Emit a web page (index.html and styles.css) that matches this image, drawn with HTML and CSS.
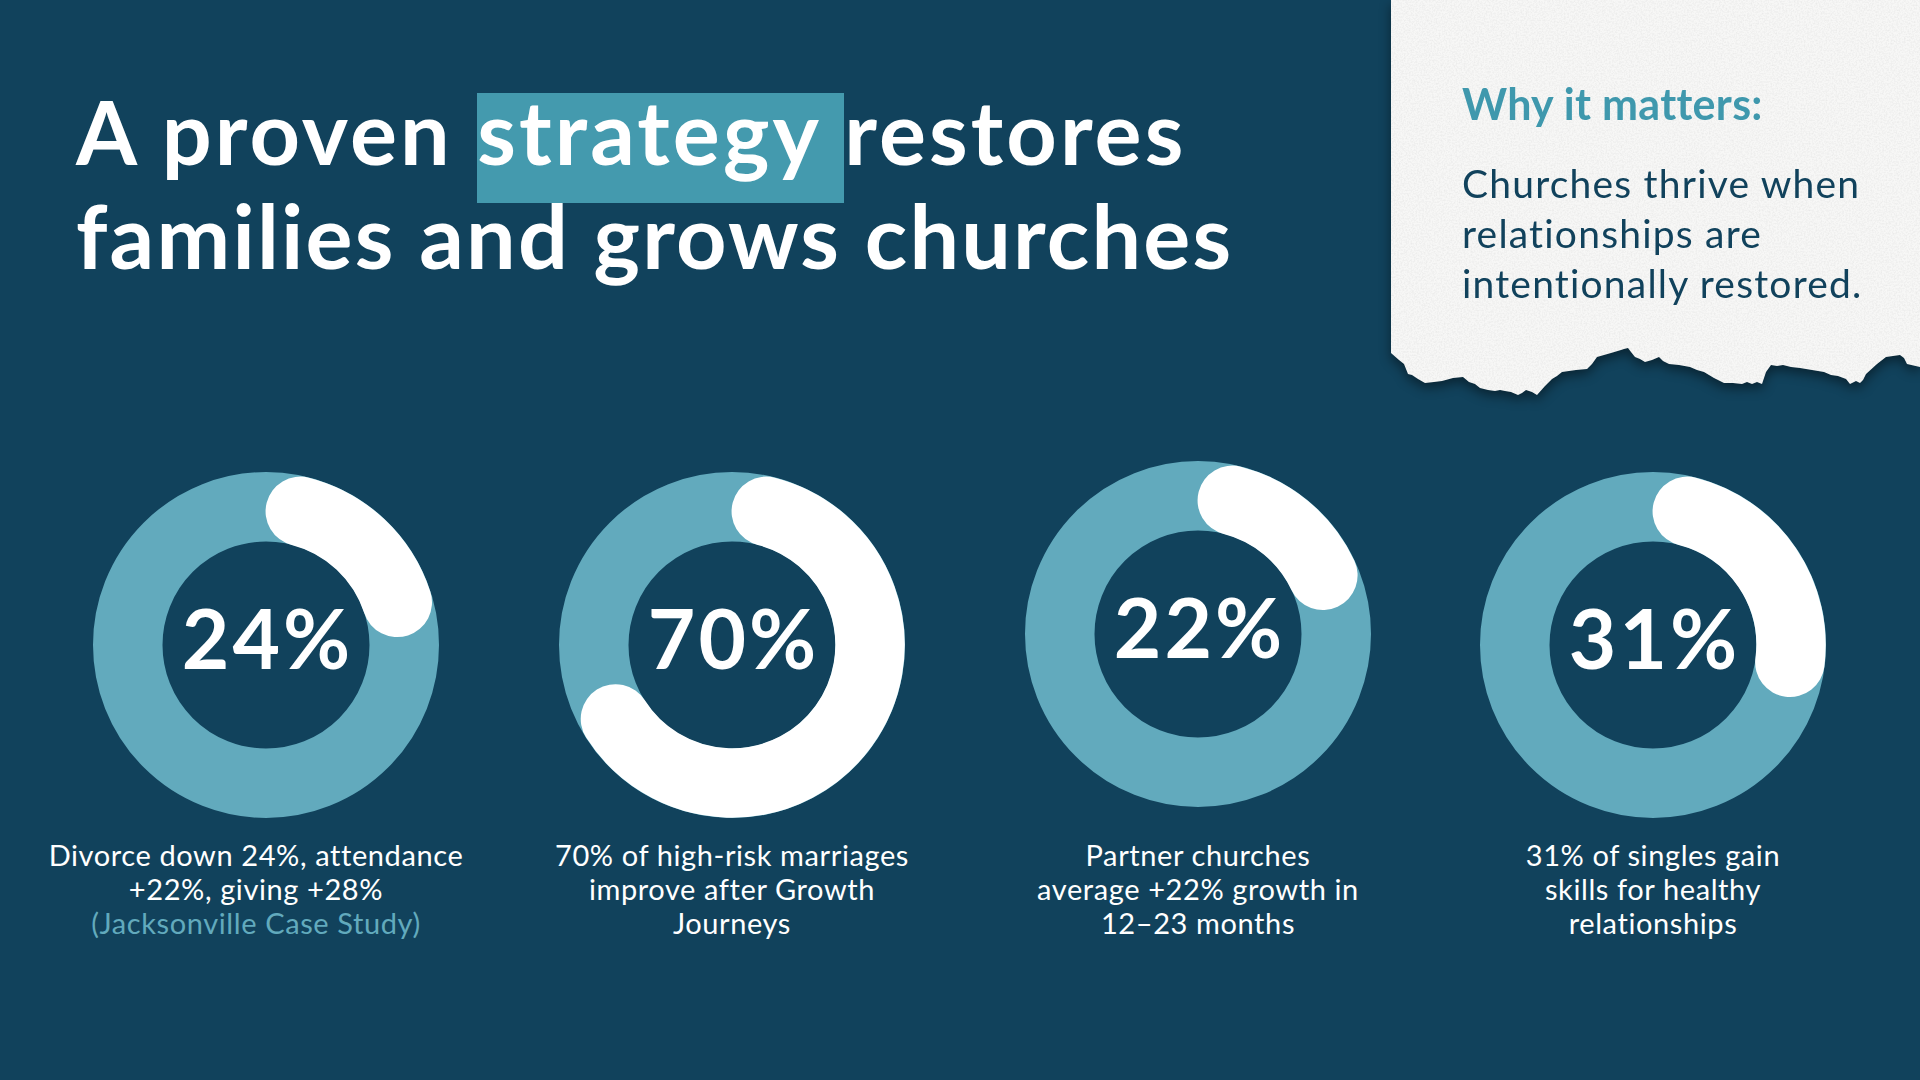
FILE: index.html
```html
<!DOCTYPE html>
<html lang="en">
<head>
<meta charset="utf-8">
<title>A proven strategy restores families and grows churches</title>
<link rel="stylesheet" href="styles.css">
</head>
<body>
<main class="slide">
  <header class="top">
    <h1 class="title"><span class="line1">A proven <span class="hl">strategy&nbsp;</span>restores</span><br>families and grows churches</h1>
    <aside class="paper-wrap">
      <div class="paper">
        <svg class="grain" width="100%" height="100%" aria-hidden="true">
          <filter id="noise" x="0" y="0" width="100%" height="100%">
            <feTurbulence type="fractalNoise" baseFrequency="0.6" numOctaves="3" seed="7" result="n"/>
            <feColorMatrix type="matrix" values="0 0 0 0 0.5  0 0 0 0 0.5  0 0 0 0 0.5  0 0 0 -1.2 0.75"/>
          </filter>
          <rect width="100%" height="100%" filter="url(#noise)" opacity="0.32"/>
        </svg>
        <div class="paper-body">
          <h2 class="why">Why it matters:</h2>
          <p class="why-text">Churches thrive when<br>relationships are<br>intentionally restored.</p>
        </div>
      </div>
    </aside>
  </header>

  <section class="stats">
    <figure class="stat">
      <div class="donut">
        <svg viewBox="0 0 346 346" width="346" height="346">
          <circle cx="173" cy="173" r="138.25" class="ring"/>
          <path d="M207.32 39.33 A138 138 0 0 1 304.25 130.36" class="arc"/>
        </svg>
        <span class="pct">24%</span>
      </div>
      <figcaption class="cap cap-first">Divorce down 24%, attendance<br>+22%, giving +28%<br><span class="src">(Jacksonville Case Study)</span></figcaption>
    </figure>
    <figure class="stat">
      <div class="donut">
        <svg viewBox="0 0 346 346" width="346" height="346">
          <circle cx="173" cy="173" r="138.25" class="ring"/>
          <path d="M207.32 39.33 A138 138 0 1 1 56.49 246.94" class="arc"/>
        </svg>
        <span class="pct">70%</span>
      </div>
      <figcaption class="cap">70% of high-risk marriages<br>improve after Growth<br>Journeys</figcaption>
    </figure>
    <figure class="stat stat-lift">
      <div class="donut">
        <svg viewBox="0 0 346 346" width="346" height="346">
          <circle cx="173" cy="173" r="138.25" class="ring"/>
          <path d="M207.32 39.33 A138 138 0 0 1 297.86 114.24" class="arc"/>
        </svg>
        <span class="pct">22%</span>
      </div>
      <figcaption class="cap">Partner churches<br>average +22% growth in<br>12–23 months</figcaption>
    </figure>
    <figure class="stat">
      <div class="donut">
        <svg viewBox="0 0 346 346" width="346" height="346">
          <circle cx="173" cy="173" r="138.25" class="ring"/>
          <path d="M207.32 39.33 A138 138 0 0 1 309.91 190.29" class="arc"/>
        </svg>
        <span class="pct">31%</span>
      </div>
      <figcaption class="cap">31% of singles gain<br>skills for healthy<br>relationships</figcaption>
    </figure>
  </section>
</main>
</body>
</html>
```

FILE: styles.css
```css
* { box-sizing: border-box; }

html, body {
  margin: 0;
  padding: 0;
  background: #11425c;
}

body {
  font-family: "Lato", "Noto Sans", "DejaVu Sans", sans-serif;
  color: #ffffff;
}

.slide {
  width: 1920px;
  height: 1080px;
  background: #11425c;
  overflow: hidden;
  display: flex;
  flex-direction: column;
}

/* ---------- header ---------- */
.top {
  display: flex;
  align-items: flex-start;
  height: 396px;
}

.title {
  flex: 1;
  margin: 0;
  padding: 79px 0 0 76px;
  font-size: 88px;
  line-height: 104px;
  font-weight: 700;
  color: #ffffff;
  letter-spacing: 2.2px;
}

.line1 {
  letter-spacing: 3.1px;
}

.hl {
  display: inline-block;
  padding: 0 0 20px 0;
  margin-bottom: -20px;
  background: linear-gradient(#449aae, #449aae) 0 14px / 100% 110px no-repeat;
}

.paper-wrap {
  flex: none;
  width: 529px;
  height: 396px;
  filter: drop-shadow(0 5px 6px rgba(0, 0, 0, 0.45));
}

.paper {
  position: relative;
  width: 100%;
  height: 100%;
  background: #f7f7f6;
  clip-path: polygon(0 0, 529px 0, 529px 367px, 516px 364px, 513px 358px, 509px 355px, 502px 356px, 495px 357px, 486px 364px, 475px 374px, 472px 380px, 469px 383px, 465px 381px, 459px 384px, 455px 379px, 447px 376px, 440px 375px, 433px 372px, 421px 370px, 409px 368px, 400px 367px, 392px 365px, 386px 366px, 380px 365px, 375px 372px, 371px 384px, 366px 382px, 361px 384px, 356px 382px, 351px 384px, 342px 383px, 333px 383px, 323px 378px, 313px 372px, 306px 370px, 299px 367px, 288px 365px, 278px 364px, 272px 361px, 268px 357px, 261px 360px, 254px 362px, 249px 359px, 244px 357px, 240px 352px, 237px 348px, 233px 349px, 230px 350px, 220px 353px, 206px 357px, 201px 364px, 196px 369px, 185px 370px, 171px 372px, 166px 376px, 161px 379px, 154px 386px, 146px 395px, 141px 392px, 135px 390px, 131px 393px, 127px 395px, 120px 392px, 114px 391px, 109px 390px, 104px 391px, 97px 390px, 89px 388px, 84px 384px, 78px 382px, 72px 377px, 62px 378px, 51px 381px, 43px 382px, 34px 383px, 27px 379px, 21px 375px, 17px 374px, 13px 364px, 8px 360px, 0 353px);
}

.grain {
  position: absolute;
  inset: 0;
  display: block;
}

.paper-body {
  position: relative;
  padding: 78px 0 0 71px;
}

.why {
  margin: 0;
  font-size: 43px;
  line-height: 1.2;
  font-weight: 700;
  color: #3f98ad;
  letter-spacing: 0.3px;
}

.why-text {
  margin: 28px 0 0;
  font-size: 39px;
  line-height: 50px;
  font-weight: 400;
  color: #11425c;
  letter-spacing: 1.2px;
}

/* ---------- stats ---------- */
.stats {
  display: grid;
  grid-template-columns: 466px 466px 466px 444px;
  padding-left: 33px;
  margin-top: 76px;
}

.stat {
  margin: 0;
  display: flex;
  flex-direction: column;
  align-items: center;
}

.stat-lift .donut {
  margin-top: -11px;
  margin-bottom: 11px;
}

.donut {
  position: relative;
  width: 346px;
  height: 346px;
}

.donut svg {
  display: block;
}

.ring {
  fill: none;
  stroke: #62aabd;
  stroke-width: 69.5;
}

.arc {
  fill: none;
  stroke: #ffffff;
  stroke-width: 69.5;
  stroke-linecap: round;
}

.pct {
  position: absolute;
  inset: 0;
  display: flex;
  align-items: center;
  justify-content: center;
  padding: 0 0 16px 3px;
  font-size: 82px;
  font-weight: 700;
  letter-spacing: 3px;
  color: #ffffff;
}

.cap {
  margin: 20px 0 0;
  font-size: 29px;
  line-height: 34px;
  letter-spacing: 0.6px;
  text-align: center;
  color: #ffffff;
}

.cap-first {
  margin-right: 20px;
}

.src {
  color: #62aabd;
}
```
